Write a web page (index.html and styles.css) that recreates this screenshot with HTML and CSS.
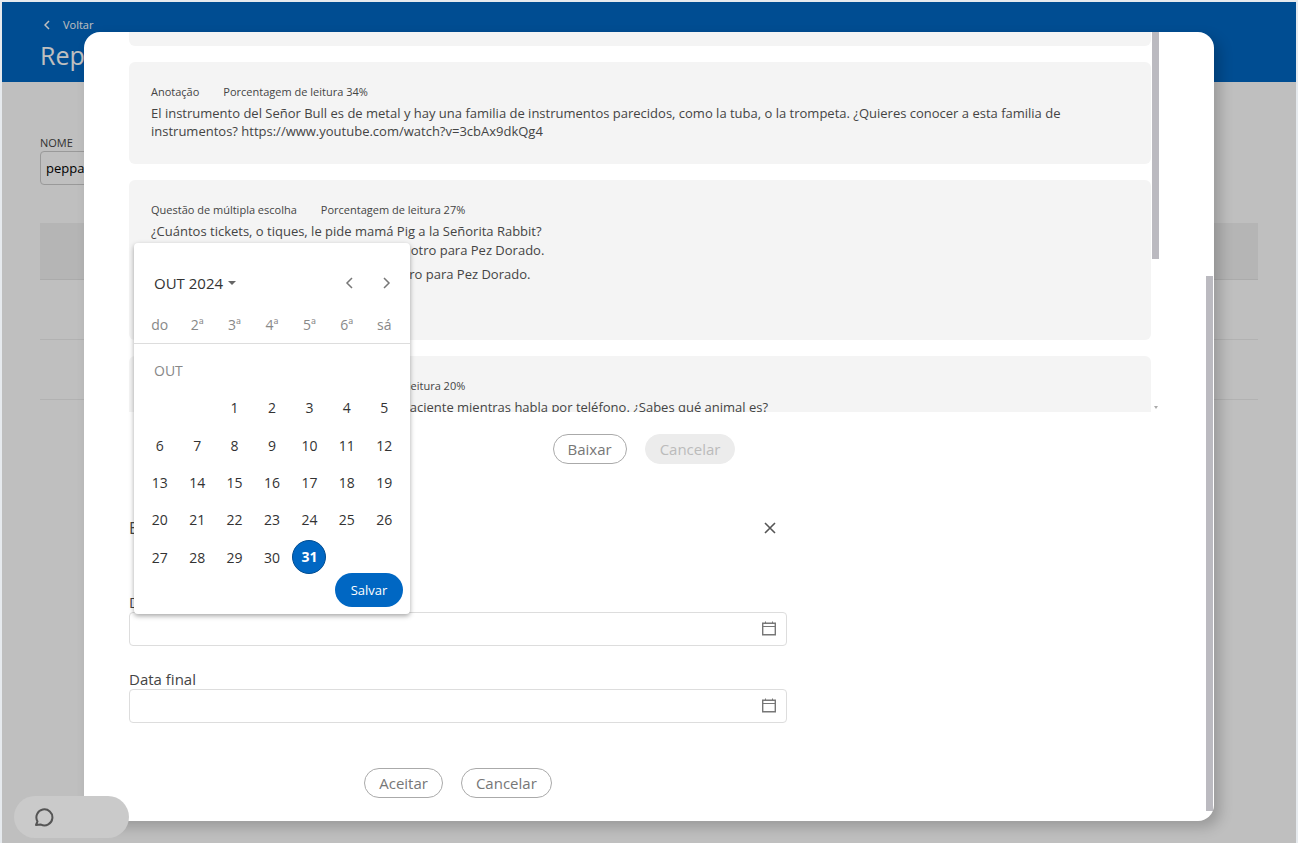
FILE: index.html
```
<!DOCTYPE html>
<html lang="pt-BR">
<head>
  <meta charset="UTF-8" />
  <meta name="viewport" content="width=device-width, initial-scale=1.0"/>
  <title>Reporte</title>
  <link rel="stylesheet" href="styles.css">
</head>
<body>
  <div class="app">
    <header class="topbar">
      <a href="#" class="back-link">
        <svg width="6" height="10" viewBox="0 0 6 10"><path d="M5 1 1 5l4 4" fill="none" stroke="currentColor" stroke-width="1.5"/></svg>
        Voltar
      </a>
      <h1>Reporte</h1>
    </header>

    <main class="page">
      <div class="filter">
        <label for="nome">NOME</label>
        <input type="text" id="nome" value="peppa"/>
      </div>
      <div class="results">
        <div class="results-head"></div>
        <div class="results-row"></div>
        <div class="results-row"></div>
      </div>
    </main>

    <div class="backdrop"></div>

    <div class="modal" role="dialog">
      <div class="modal-body">
        <div class="notes">
          <div class="notes-list">
            <div class="card card-cut"></div>
            <div class="card card-short">
              <div class="meta"><span>Anotação</span><span>Porcentagem de leitura 34%</span></div>
              <p>El instrumento del Señor Bull es de metal y hay una familia de instrumentos parecidos, como la tuba, o la trompeta. ¿Quieres conocer a esta familia de instrumentos? https://www.youtube.com/watch?v=3cbAx9dkQg4</p>
            </div>
            <div class="card card-tall">
              <div class="meta"><span>Questão de múltipla escolha</span><span>Porcentagem de leitura 27%</span></div>
              <p>¿Cuántos tickets, o tiques, le pide mamá Pig a la Señorita Rabbit?</p>
              <ul class="options">
                <li>Cinco tickets, cuatro para la familia Pig y el otro para Pez Dorado.</li>
                <li>Cinco tickets, cuatro para la familia Pig y otro para Pez Dorado.</li>
              </ul>
            </div>
            <div class="card">
              <div class="meta"><span>Questão de múltipla escolha</span><span>Porcentagem de leitura 20%</span></div>
              <p>El Doctor Hámster atiende a un pequeño paciente mientras habla por teléfono. ¿Sabes qué animal es?</p>
            </div>
          </div>
          <div class="notes-scroll">
            <div class="thumb"></div>
            <div class="arrow-down"></div>
          </div>
        </div>

        <div class="actions">
          <button class="btn">Baixar</button>
          <button class="btn" disabled>Cancelar</button>
        </div>

        <form class="dates">
          <div class="dates-head">
            <h2>Escolha as datas</h2>
            <button type="button" class="icon-btn" aria-label="Fechar">
              <svg width="12" height="12" viewBox="0 0 12 12"><path d="M1 1l10 10M11 1 1 11" stroke="#555" stroke-width="1.6"/></svg>
            </button>
          </div>

          <div class="field">
            <label for="inicio">Data inicial</label>
            <div class="date-box">
              <input type="text" id="inicio"/>
              <button type="button" class="icon-btn" aria-label="Abrir calendário">
                <svg width="14" height="16" viewBox="0 0 14 16"><path d="M.7 2.200h12.600v11.600H.7z" fill="none" stroke="#777" stroke-width="1.400"/><path d="M3.500 .5v2M10.500 .5v2M1 5.500h12" stroke="#777"/></svg>
              </button>
            </div>

            <div class="calendar">
              <div class="cal-head">
                <button type="button" class="cal-period">OUT 2024 <span class="caret"></span></button>
                <button type="button" class="icon-btn" aria-label="Mês anterior">
                  <svg width="8" height="12" viewBox="0 0 8 12"><path d="M7 1 2 6l5 5" fill="none" stroke="#777" stroke-width="1.5"/></svg>
                </button>
                <button type="button" class="icon-btn" aria-label="Próximo mês">
                  <svg width="8" height="12" viewBox="0 0 8 12"><path d="m1 1 5 5-5 5" fill="none" stroke="#777" stroke-width="1.5"/></svg>
                </button>
              </div>
              <table class="cal-week">
                <thead>
                  <tr><th>do</th><th>2ª</th><th>3ª</th><th>4ª</th><th>5ª</th><th>6ª</th><th>sá</th></tr>
                </thead>
              </table>
              <table class="cal-days">
                <tbody>
                  <tr><td colspan="7" class="month">OUT</td></tr>
                  <tr><td></td><td></td><td>1</td><td>2</td><td>3</td><td>4</td><td>5</td></tr>
                  <tr><td>6</td><td>7</td><td>8</td><td>9</td><td>10</td><td>11</td><td>12</td></tr>
                  <tr><td>13</td><td>14</td><td>15</td><td>16</td><td>17</td><td>18</td><td>19</td></tr>
                  <tr><td>20</td><td>21</td><td>22</td><td>23</td><td>24</td><td>25</td><td>26</td></tr>
                  <tr><td>27</td><td>28</td><td>29</td><td>30</td><td><span class="today">31</span></td><td></td><td></td></tr>
                </tbody>
              </table>
              <button type="button" class="save">Salvar</button>
            </div>
          </div>

          <div class="field">
            <label for="fim">Data final</label>
            <div class="date-box">
              <input type="text" id="fim"/>
              <button type="button" class="icon-btn" aria-label="Abrir calendário">
                <svg width="14" height="16" viewBox="0 0 14 16"><path d="M.7 2.200h12.600v11.600H.7z" fill="none" stroke="#777" stroke-width="1.400"/><path d="M3.500 .5v2M10.500 .5v2M1 5.500h12" stroke="#777"/></svg>
              </button>
            </div>
          </div>

          <div class="actions dates-actions">
            <button type="button" class="btn">Aceitar</button>
            <button type="button" class="btn">Cancelar</button>
          </div>
        </form>
      </div>
      <div class="modal-scroll"></div>
    </div>

    <button class="chat" aria-label="Chat">
      <svg width="20" height="20" viewBox="0 0 20 20"><path d="M2 18l1.500-3.600A8 8 0 1 1 7 17.600z" fill="none" stroke="#555" stroke-width="2" stroke-linejoin="round"/></svg>
    </button>
  </div>
</body>
</html>
```

FILE: styles.css
```
:root {
  --blue: #0067c3;
  --text: #444;
  --muted: #888;
  --card: #f4f4f4;
  --thumb: #bbbac0;
}
* {
  box-sizing: border-box;
}
body {
  margin: 0;
  padding: 2px 2px 0;
  background: #e6eaee;
  font-family: "Open Sans", "Noto Sans", sans-serif;
  font-size: 13px;
  color: var(--text);
}
h1, h2, p, ul {
  margin: 0;
  padding: 0;
  font-weight: normal;
}
button, input {
  font-family: inherit;
  font-size: 13px;
}
svg {
  display: block;
}
.app {
  position: relative;
  height: calc(100vh - 2px);
  min-height: 820px;
  background: #fff;
  overflow: hidden;
}

/* page behind the dialog */
.topbar {
  height: 80px;
  padding: 15px 38px 0;
  background: var(--blue);
  color: #fff;
}
.back-link {
  display: flex;
  align-items: center;
  gap: 13px;
  padding-left: 4px;
  font-size: 11px;
  line-height: 16px;
  color: inherit;
  text-decoration: none;
}
.topbar h1 {
  margin-top: 4px;
  font-size: 25px;
  line-height: 36px;
}
.page {
  padding: 53px 38px 0;
}
.filter {
  display: flex;
  flex-direction: column;
  width: 240px;
}
.filter label {
  font-size: 11px;
  line-height: 16px;
}
.filter input {
  height: 34px;
  padding: 0 5px;
  border: 1px solid #ccc;
  border-radius: 4px;
  background: none;
  color: #000;
}
.results {
  margin-top: 38px;
}
.results-head {
  height: 57px;
  background: #f2f2f2;
  border-bottom: 1px solid #e4e4e4;
}
.results-row {
  height: 60px;
  border-bottom: 1px solid #eee;
}
.backdrop {
  position: absolute;
  inset: 0;
  background: rgba(0, 0, 0, 0.25);
}

/* dialog */
.modal {
  position: absolute;
  inset: 30px 82px 22px;
  background: #fff;
  border-radius: 16px;
  box-shadow: 6px 6px 14px rgba(0, 0, 0, 0.2);
}
.modal-body {
  padding: 0 55px 0 45px;
}
.modal-scroll {
  position: absolute;
  top: 244px;
  right: 1px;
  bottom: 10px;
  width: 7px;
  background: var(--thumb);
}
.notes {
  display: flex;
  height: 380px;
}
.notes-list {
  flex: 1;
  overflow: hidden;
}
.notes-scroll {
  display: flex;
  flex-direction: column;
  align-items: center;
  justify-content: space-between;
  margin-left: 1px;
  padding-bottom: 3px;
}
.thumb {
  width: 7px;
  height: 227px;
  background: var(--thumb);
}
.arrow-down {
  border: 2px solid transparent;
  border-top: 3px solid #aaa;
  border-bottom: 0;
}
.card {
  margin-bottom: 16px;
  padding: 22px;
  background: var(--card);
  border-radius: 6px;
}
.card-cut {
  height: 14px;
  padding: 0;
  border-radius: 0 0 6px 6px;
}
.card-short {
  height: 102px;
}
.card-tall {
  height: 160px;
}
.card p {
  line-height: 18px;
}
.meta {
  display: flex;
  gap: 24px;
  margin-bottom: 4px;
  font-size: 11px;
  line-height: 16px;
}
.options {
  list-style: none;
}
.options li {
  margin-bottom: 4px;
  line-height: 20px;
}
.actions {
  display: flex;
  justify-content: center;
  gap: 18px;
  margin-top: 22px;
}
.btn {
  height: 30px;
  padding: 0 14px;
  background: #fff;
  border: 1px solid #aaa;
  border-radius: 15px;
  font-size: 15px;
  color: #777;
}
.btn:disabled {
  background: #ececec;
  border-color: #ececec;
  color: #bbb;
}

/* date range */
.dates {
  width: 658px;
  max-width: 100%;
  margin-top: 50px;
}
.dates-head {
  display: flex;
  align-items: center;
  justify-content: space-between;
  height: 28px;
  margin-bottom: 50px;
  padding-right: 11px;
}
.dates-head h2 {
  font-size: 16px;
}
.icon-btn {
  padding: 0;
  background: none;
  border: none;
  cursor: pointer;
}
.field {
  position: relative;
  margin-bottom: 23px;
}
.field label {
  display: block;
  font-size: 15px;
  line-height: 20px;
}
.date-box {
  display: flex;
  align-items: center;
  height: 34px;
  padding-right: 10px;
  border: 1px solid #ddd;
  border-radius: 4px;
}
.date-box input {
  flex: 1;
  padding: 0 10px;
  border: none;
  outline: none;
  background: none;
}
.dates-actions {
  margin-top: 45px;
}

/* calendar popup */
.calendar {
  position: absolute;
  left: 5px;
  bottom: 32px;
  width: 276px;
  height: 371px;
  background: #fff;
  border-radius: 4px;
  box-shadow: 0 2px 5px rgba(0, 0, 0, 0.35);
}
.cal-head {
  display: flex;
  align-items: center;
  gap: 30px;
  height: 62px;
  padding: 18px 19px 0 20px;
}
.cal-period {
  display: flex;
  align-items: center;
  gap: 5px;
  margin-right: auto;
  padding: 0;
  background: none;
  border: none;
  font-size: 15px;
  color: #333;
}
.caret {
  border: 4px solid transparent;
  border-top-color: #666;
  border-bottom: 0;
}
.cal-week, .cal-days {
  width: 100%;
  padding: 0 7px;
  border-spacing: 0;
  table-layout: fixed;
  font-size: 14px;
  text-align: center;
}
.cal-week {
  height: 39px;
  border-bottom: 1px solid #ddd;
}
.calendar th, .calendar td {
  padding: 0;
}
.cal-week th {
  font-weight: normal;
  color: var(--muted);
}
.cal-days {
  height: 224px;
  margin-top: 8px;
  color: #333;
}
.cal-days td {
  height: 37px;
}
.cal-days .month {
  padding-left: 13px;
  text-align: left;
  color: var(--muted);
}
.today {
  display: block;
  width: 34px;
  height: 34px;
  margin: 0 auto;
  border: 1px solid #004c91;
  border-radius: 50%;
  background: var(--blue);
  color: #fff;
  font-weight: bold;
  line-height: 32px;
}
.save {
  position: absolute;
  right: 7px;
  bottom: 7px;
  width: 68px;
  height: 34px;
  padding: 0;
  background: var(--blue);
  border: none;
  border-radius: 17px;
  color: #fff;
}

.chat {
  position: absolute;
  left: 12px;
  bottom: 5px;
  width: 115px;
  height: 42px;
  padding: 0 20px;
  background: #cacaca;
  border: none;
  border-radius: 21px;
}
```
